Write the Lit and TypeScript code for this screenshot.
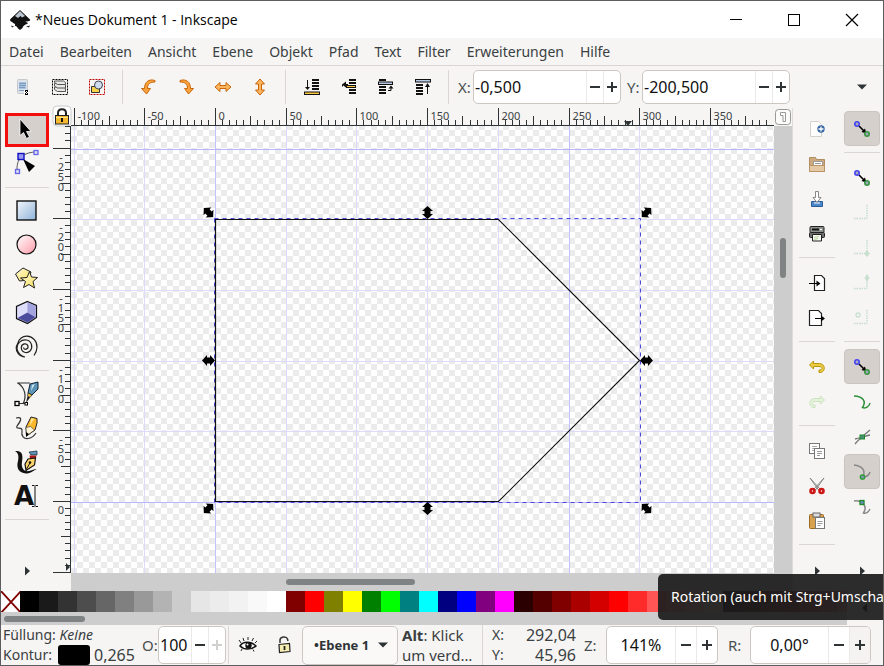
import { LitElement, html, svg, css, type SVGTemplateResult } from "lit";
import { customElement, property } from "lit/decorators.js";
import { classMap } from "lit/directives/class-map.js";

const nodes = (line: string) => svg`
  <path d="M9 9 L14 14" stroke="#000" stroke-width="1.6"/>
  <path d="M16.5 16.5 L11.5 15 L15 11.5Z" fill="#000"/>
  <circle cx="7" cy="7" r="2.2" fill="#aab" stroke="${line}" stroke-width="1.6"/>
  <circle cx="17" cy="17" r="2.2" fill="#9ab" stroke="#3a9440" stroke-width="1.6"/>`;

const dotted = svg`<path d="M17 4 V17.5 M4 17.5 H17" stroke="#c3dccb" stroke-width="1.4" stroke-dasharray="1.5 1" fill="none"/>`;
const bars = (x: number, ys: number[]) => ys.map((y) => svg`<path d="M${x} ${y} h7" stroke="#111" stroke-width="2"/>`);

const ICONS: Record<string, SVGTemplateResult> = {
  selectAll: svg`
    <rect x="6.500" y="4.500" width="10" height="14" rx="1" fill="#dde4ea" stroke="#c3c9cd"/>
    <path d="M8 7h7v7H8z" fill="#a9c4e2"/><path d="M8 8.500h7M8 10.500h7M8 12.500h6M8 15.500h5" stroke="#7d9cbd"/>
    <path d="M13 15h5v5h-5z" fill="#fff"/><path d="M14 15.500h3M14 19.500h3M14 16l3 3M17 16l-3 3" stroke="#000" stroke-width="1"/>`,
  layers: svg`
    <rect x="4.500" y="4.500" width="15" height="15" fill="none" stroke="#000" stroke-dasharray="2 1"/>
    <g fill="#e8e8e6" stroke="#555" stroke-width="1"><path d="M6.500 14.500l3 2h8v-3l-2-1.500h-9z"/><path d="M6.500 11l3 2h8v-3l-2-1.500h-9z"/><path d="M6.500 7.500l3 2h8v-2l-2-1.500h-9z"/></g>`,
  deselect: svg`
    <rect x="4.500" y="4.500" width="15" height="15" fill="none" stroke="#c00000" stroke-dasharray="2 1"/>
    <path d="M6.500 11.500h8v6h-8z" fill="#fbd34a" stroke="#333"/><circle cx="13.500" cy="10" r="4" fill="#cfdced" stroke="#445"/>`,
  rotLeft: svg`<path d="M18 5.500 C12 3.500 7.500 7 7.500 13.500 H4.500 L9.500 19 L13.500 13.500 H10.500 C10.500 9 13 7 18 7Z" fill="#f9a13a" stroke="#c9660a"/>`,
  rotRight: svg`<path d="M6 5.500 C12 3.500 16.500 7 16.500 13.500 H19.500 L14.500 19 L10.500 13.500 H13.500 C13.500 9 11 7 6 7Z" fill="#f9a13a" stroke="#c9660a"/>`,
  flipH: svg`<path d="M4 12 L9 7.500 V10.500 H15 V7.500 L20 12 L15 16.500 V13.500 H9 V16.500Z" fill="#fbb55f" stroke="#c9660a"/>`,
  flipV: svg`<path d="M12 4 L16.500 9 H13.500 V15 H16.500 L12 20 L7.500 15 H10.500 V9 H7.500Z" fill="#fbb55f" stroke="#c9660a"/>`,
  toBottom: svg`${bars(12, [5, 8, 11, 14])}<path d="M7.500 5v9" stroke="#111"/><path d="M5 12h5l-2.500 3z" fill="#111"/><rect x="4.500" y="17" width="15" height="2.500" fill="#fbc73c" stroke="#111"/>`,
  lower: svg`${bars(12, [5, 8, 15, 18])}<path d="M6 9.500h5M5.500 9.500v2" stroke="#111"/><path d="M9 6.500v6l-4-3z" fill="#111"/><rect x="9.500" y="10.500" width="9" height="2" fill="#fbc73c" stroke="#111"/>`,
  raise: svg`${bars(5, [5, 12, 15, 18])}<rect x="4.500" y="7" width="14" height="2.500" fill="#b9cbe6" stroke="#111"/><path d="M14 15.500h3v-3" stroke="#111" fill="none"/><path d="M14.500 13.500h5l-2.500-3z" fill="#111"/>`,
  toTop: svg`${bars(5, [10, 13, 16, 19])}<rect x="4.500" y="4.500" width="15" height="2.500" fill="#b9cbe6" stroke="#111"/><path d="M16.500 10v9" stroke="#111"/><path d="M14 12h5l-2.500-4z" fill="#111"/>`,
  select: svg`<path d="M5 1 V17.500 L8.500 14.500 L11.500 20.500 L14.500 19 L11.500 13.500 H16Z" fill="#000" stroke="#fff" stroke-width="0.8"/>`,
  node: svg`<path d="M2 17 C2 8 6 1 20 0" fill="none" stroke="#555"/>
    <path d="M8 7 L20 14 L14 20Z" fill="#000"/>
    <rect x="3" y="1.500" width="6" height="6" fill="#9a9af0" stroke="#1111c0" stroke-width="1.400"/>
    <rect x="19" y="-1.500" width="4" height="4" fill="#dde" stroke="#6666e8" stroke-width="1.300"/>
    <rect x="0.500" y="17.500" width="4" height="4" fill="#dde" stroke="#6666e8" stroke-width="1.300"/>`,
  rect: svg`<rect x="2" y="2" width="19" height="19" fill="url(#g-blue)" stroke="#000" stroke-width="1.300"/>`,
  ellipse: svg`<circle cx="11.500" cy="11.500" r="9.500" fill="url(#g-pink)" stroke="#111" stroke-width="1.200"/>`,
  star: svg`<path d="M8 1 L16 5 L13.500 13 L4.500 14 L0.500 7Z" fill="url(#g-yel)" stroke="#222"/>
    <path d="M14.500 4.500 L16.500 10 L22.500 10.500 L18 14.500 L19.500 21 L14 17.500 L8.500 20.500 L10.500 14.500 L5.500 11 L12 10.500Z" fill="url(#g-yel)" stroke="#222"/>`,
  cube: svg`<path d="M12.500 0.500 L21.500 4.500 V16.500 L12.500 22.500 L1.500 17.500 V5.500Z" fill="#c9c9f4" stroke="#111" stroke-width="1.200"/>
    <path d="M12.500 1.500 L2.500 6 V17 L12.500 11.500Z" fill="#dedefb"/><path d="M12.500 11.500 L2.500 17 L12.500 21.500 L20.500 16Z" fill="#4c4c9c"/><path d="M12.500 1.500 L20.500 5 V16 L12.500 11.500Z" fill="#a3a3de"/>`,
  spiral: svg`<path d="M8.500 12.500 C9 15.500 13.500 14.500 13 11 C12 7.500 6.500 8.500 6.300 12.500 C6.200 17.500 12 19 15 16 C18.500 12 16.500 6 11.500 5 C6 4.200 1.500 8.500 2 13.500 C2.500 18 6 21.500 10 22 M2.500 9 C3.500 3.500 8 1 12 1.200 C18 1.500 22.300 6.500 22 12.500 C21.800 16 20.500 18.500 19 20.500 M10 22 C4 22 1 16.500 1.200 12.500 C1.300 11 2 10 2.500 9" fill="none" stroke="#222" stroke-width="1.200"/>`,
  pen: svg`<path d="M2 1 H15 M3 1 C10 6 12 14 8 22 M4 21.500 H12" fill="none" stroke="#333" stroke-width="1.200"/>
    <path d="M15 2 L23 0 V7 L17 13 L13 11Z" fill="#5d93b5" stroke="#123"/><path d="M17 3 L20 2 L16 9Z" fill="#cfe4f0"/>
    <path d="M13 11 L17 13 L15 15.500 L12.500 13.500Z" fill="#fbc73c" stroke="#222" stroke-width="0.700"/><path d="M12.500 14 L15 15.500 L11 21Z" fill="#222"/>
    <rect x="0" y="19.500" width="4" height="4" fill="#fff" stroke="#000" stroke-width="1.300"/><rect x="10" y="20.500" width="2.500" height="2.500" fill="#fff" stroke="#000"/>`,
  pencil: svg`<path d="M1 2 C9 0 5 6 2 10 C0 14 8 10 7 15 C6 20 9 23 13 22.500 C17 22 19 20 21 17" fill="none" stroke="#333" stroke-width="1.200"/>
    <path d="M11 11 L16 1 L22 2.500 V7 L20 14 L11.500 20Z" fill="#fbb82a" stroke="#222"/><path d="M11 11.500 L15.500 10.500 L19.500 14 L11.500 20Z" fill="#fff3d6" stroke="#333" stroke-width="0.600"/><path d="M16.500 2 L19 3 L14.500 10Z" fill="#ffe79a"/><path d="M11 16 L14 18 L11 21Z" fill="#000"/>`,
  calligraphy: svg`<path d="M0 1 C8 0 8 6 7 12 C6 18 9 22 14 21 C18 20 20 18 22 20 C19 19 17 24 11 23.500 C4 23 1 18 3 11 C4 5 3 3 0 1Z" fill="#111"/>
    <path d="M14 2 L22 1 V5 L16 5Z" fill="#5d93b5" stroke="#123" stroke-width="0.700"/><path d="M14.500 5.500 H21.500 L20.500 9 H15Z" fill="#b01818"/>
    <path d="M13 9 L20.500 8 L19.500 15 L11 20.500 L10 14Z" fill="#fcd46a" stroke="#111" stroke-width="1.200"/><path d="M11.500 19 L15 13" stroke="#111"/><circle cx="15" cy="12.500" r="1.300" fill="#111"/>`,
  newDoc: svg`<path d="M5.500 4.500h8l3 3v12h-11z" fill="#fdfdfb" stroke="#d3d3cc"/><circle cx="16" cy="12" r="3.700" fill="#3465a4"/><path d="M16 9.500v5M13.500 12h5" stroke="#fff" stroke-width="1.300"/>`,
  open: svg`<path d="M4.500 5.500h6l1 2h8v12h-15z" fill="#cda97e" stroke="#b08c62"/><path d="M8.500 9.500h9v4h-9z" fill="#fff" stroke="#999"/><path d="M10 11.500h6" stroke="#999"/><path d="M4.500 13.500h15v6h-15z" fill="#e4c9a4" stroke="#b89468"/>`,
  save: svg`<path d="M6.500 14.500h11v5h-11z" fill="#4a86c9" stroke="#2d5d96"/><path d="M9 16h6" stroke="#cde" stroke-width="1.500"/><path d="M10.500 4.500h3v6h2.500l-4 5l-4-5h2.500z" fill="#fff" stroke="#888"/>`,
  print: svg`<rect x="5" y="4.500" width="14" height="6" rx="1" fill="#8d928e" stroke="#222"/><path d="M7 7.500h7" stroke="#111" stroke-width="2"/><path d="M15 7.500h2" stroke="#fff"/><rect x="4.500" y="10.500" width="15" height="5" rx="1" fill="#6b706d" stroke="#222"/><path d="M7.500 12.500h9v6.500h-9z" fill="#f6faf0" stroke="#222"/><path d="M9 15.500l5-1M9 17.500l4-1" stroke="#b5d59c"/>`,
  importDoc: svg`<path d="M9.500 4.500h7l3 3v12h-10z" fill="#fff" stroke="#222" stroke-width="1.200"/><path d="M4 12.500h9" stroke="#000"/><path d="M11.500 9.500v6l4-3z" fill="#000"/>`,
  exportDoc: svg`<path d="M4.500 4.500h9l3 3v12h-12z" fill="#fff" stroke="#222" stroke-width="1.200"/><path d="M10 12.500h8" stroke="#000"/><path d="M16 9.500v6l4-3z" fill="#000"/>`,
  undo: svg`<path d="M8.500 6 L4.500 10 L8.500 14 V11.500 H14 C18 11.500 18 15 14 15 V17.500 C21 18 21 9 14.500 8.500 H8.500Z" fill="#eccc42" stroke="#b8960c"/>`,
  redo: svg`<path d="M15.500 6 L19.500 10 L15.500 14 V11.500 H10 C6 11.500 6 15 10 15 V17.500 C3 18 3 9 9.500 8.500 H15.500Z" fill="#e3f3da" stroke="#cbe3bf"/>`,
  copy: svg`<rect x="4.500" y="4.500" width="10" height="10" fill="#fff" stroke="#777"/><path d="M7 7.500h5M7 9.500h5M7 11.500h3" stroke="#aaa"/><rect x="9.500" y="9.500" width="10" height="10" fill="#fff" stroke="#777"/><path d="M12 12.500h5M12 14.500h5M12 16.500h3" stroke="#999"/>`,
  cut: svg`<path d="M5 4 L15 15 L13.500 16Z M19 4 L9 15 L10.500 16Z" fill="#fff" stroke="#888"/><circle cx="7.500" cy="17" r="2" fill="#fff" stroke="#cc1717" stroke-width="2.600"/><circle cx="16.500" cy="17" r="2" fill="#fff" stroke="#cc1717" stroke-width="2.600"/>`,
  paste: svg`<rect x="4.500" y="5.500" width="14" height="14" rx="1" fill="#d9a04e" stroke="#9b6a22"/><rect x="8" y="4" width="7" height="4" fill="#ddd" stroke="#666"/><rect x="10.500" y="8.500" width="9" height="11" fill="#fff" stroke="#777"/><path d="M12.500 12.500h5M12.500 14.500h5M12.500 16.500h3" stroke="#999"/>`,
  snap: nodes("#4444f0"),
  snapBox: dotted,
  snapMid: svg`${dotted}<path d="M17 14l3 3.500l-3 3.500l-3-3.500z" fill="#c9e0d0"/>`,
  snapEdge: svg`${dotted}<path d="M17 3l2.500 4l-2.500 4l-2.500-4z" fill="#c9e0d0"/>`,
  snapCenter: svg`${dotted}<circle cx="8" cy="9" r="2" fill="none" stroke="#c9e0d0" stroke-width="1.300"/>`,
  snapPath: svg`<path d="M4 6 C12 6 17 11 12.500 17.500 C16 19 19.500 16 20 13" fill="none" stroke="#2c9038" stroke-width="1.500"/>`,
  snapCross: svg`<path d="M5 19 C8 15 14 10 20 5 M5 14 C10 13 15 11 20 10" fill="none" stroke="#777" stroke-width="1.300"/><rect x="10" y="10" width="4.500" height="4" fill="#4a8f7a" stroke="#1f8a28"/>`,
  snapCusp: svg`<path d="M4 5 C12 6 16 10 13 17 C17 17 19 15 20 12" fill="none" stroke="#888" stroke-width="1.500"/><circle cx="12.500" cy="17" r="2.200" fill="#7a9aa8" stroke="#2c9a34" stroke-width="1.300"/>`,
  snapSmooth: svg`<path d="M4 6 C12 5 18 11 13.500 18 C17 19 19 16 20 14" fill="none" stroke="#888" stroke-width="1.500"/><rect x="10" y="5.500" width="4" height="4" fill="#6a8fc0" stroke="#1f8a28" stroke-width="1.300"/>`,
  eye: svg`<path d="M4 13 C7 8 15 8 20 13 C15 17 8 17 4 13Z" fill="#fff" stroke="#111" stroke-width="1.500"/><circle cx="12.500" cy="12.500" r="3.200" fill="#111"/><circle cx="11.500" cy="11.500" r="1" fill="#fff"/><path d="M5 10L3 7M8 8L7 5M12 7V4M16 8L17.500 5M19 10L21 8M6 16L5 18M17 16.500L18 18.500" stroke="#222"/>`,
  unlock: svg`<path d="M8 10 V7 C8 3.500 14.500 3 15.500 6 L16 8" fill="none" stroke="#333" stroke-width="1.500"/><path d="M7 11.500 L17.500 10.500 L18 18.500 L7.500 19.500Z" fill="#f6edb0" stroke="#222" stroke-width="1.200"/><path d="M12.500 13v4" stroke="#222" stroke-width="1.800"/>`,
  lock: svg`<rect x="3" y="1" width="18" height="20" rx="4" fill="#fff" stroke="#ccc"/><path d="M8 11 V8 C8 3 16 3 16 8 V11" fill="none" stroke="#222" stroke-width="2"/><rect x="5.500" y="10.500" width="13" height="8.500" fill="#f5b82e" stroke="#222"/><path d="M6 12.500h12" stroke="#ffe28a"/><path d="M12 13v4" stroke="#111" stroke-width="2"/>`,
  minus: svg`<path d="M7 12h10" stroke="currentColor" stroke-width="2"/>`,
  plus: svg`<path d="M7 12h10M12 7v10" stroke="currentColor" stroke-width="2"/>`,
  right: svg`<path d="M10 7.500v9l5-4.500z" fill="#2e3436"/>`,
  left: svg`<path d="M14 7.500v9l-5-4.500z" fill="#000"/>`,
  down: svg`<path d="M7 9.500h10l-5 5z" fill="#2e3436"/>`,
  page: svg`<rect x="4.500" y="4.500" width="15" height="15" rx="3" fill="#fbfbfa" stroke="#999"/><path d="M9.500 7.500h5v9h-2.500v-6h-2.500z" fill="#fff" stroke="#999"/>`,
  minimize: svg`<path d="M6 11.500h12" stroke="#000"/>`,
  maximize: svg`<rect x="6.500" y="6.500" width="11" height="11" fill="none" stroke="#000"/>`,
  close: svg`<path d="M6 6l12 12M18 6l-12 12" stroke="#000" stroke-width="1.200"/>`,
  none: svg`<rect width="24" height="24" fill="#fff"/><path d="M1 0L23 24M23 0L1 24" stroke="#800000" stroke-width="2"/>`,
  logo: svg`<path d="M12 2 L22 11.500 C23 13 20 13.500 17 13.500 C19 14.500 21 15 19 16 C16 17 15 18 14.500 20 L12 22 L9.500 20 C10 18 6 18.500 7 17 C8 16 5 15 2.500 13 C1.500 12 2 11.500 3 10.500Z" fill="#111"/><path d="M12 3 L17 8 L14 9.500 L12.500 8 L10 10 L7 8Z" fill="#b9c2cf"/><path d="M3 17.500l3 1-2 1zM18 18.500l4-1-1 2z" fill="#222"/>`,
};

const icon = (name: string, size = 24) =>
  svg`<svg class="icon" width="${size}" height="${size}" viewBox="0 0 24 24" fill="none" aria-hidden="true">${ICONS[name]}</svg>`;

const shared = css`
  * { box-sizing: border-box; }
  button { font: inherit; color: inherit; border: 0; background: none; padding: 0; margin: 0; display: flex; align-items: center; justify-content: center; }
  .icon { display: block; flex: none; overflow: visible; }
`;

@customElement("spin-box")
class SpinBox extends LitElement {
  @property() label = "";
  @property() name = "";
  @property() value = "";
  @property({ type: Boolean }) full = false;
  static styles = [shared, css`
    :host { display: flex; align-items: center; }
    label { flex: none; width: var(--label, 15px); color: #4a4f50; font-size: 15px; }
    .box { flex: 1; display: flex; align-self: stretch; min-width: 0; background: #fff; border: 1px solid #cdc7c2; border-radius: 5px; overflow: hidden; }
    input { flex: 1; min-width: 0; width: 0; border: 0; outline: 0; padding: 0 1px; background: none; font: inherit; color: #111; text-align: var(--align, left); }
    button { width: var(--step, 17px); border-left: 1px solid #ebe9e7; color: #2e3436; }
    .off { color: #d0d0ce; }
    .hot { background: #f4f3f2; }
  `];
  render() {
    return html`<label for="v">${this.label}</label>
      <div class="box">
        <input id="v" .value=${this.value} />
        <button aria-label="Verringern">${icon("minus")}</button>
        <button class=${classMap({ off: this.full, hot: this.name === "rotation" })} aria-label="Erhöhen">${icon("plus")}</button>
      </div>`;
  }
}

const ORIGIN_X = 144;
const ORIGIN_Y = 376;
const UNIT = 7.07;

@customElement("ruler-top")
class RulerTop extends LitElement {
  static styles = css`:host { display: block; height: 18px; overflow: hidden; } svg { display: block; width: 100%; height: 18px; } .scale { font: 11px "Noto Sans", sans-serif; fill: #3c4142; }`;
  render() {
    const ticks = [];
    for (let i = -20; i <= 79; i++) {
      const x = Math.round(ORIGIN_X + i * UNIT) + 0.5;
      const y = i % 10 === 0 ? 0 : i % 5 === 0 ? 8 : 12;
      ticks.push(svg`<path d="M${x} ${y}V17" stroke="#2e3436"/>`);
      if (i % 10 === 0) ticks.push(svg`<text class="scale" x="${x + 3}" y="12">${i * 5}</text>`);
    }
    return html`<svg>${ticks}<path d="M0 17.500H4000" stroke="#2e3436"/><path d="M553 13h8l-4 5z" fill="#2e3436"/></svg>`;
  }
}

@customElement("ruler-side")
class RulerSide extends LitElement {
  static styles = css`:host { display: block; width: 18px; overflow: hidden; } svg { display: block; width: 18px; height: 100%; } .scale { font: 11px "Noto Sans", sans-serif; fill: #3c4142; text-anchor: middle; }`;
  render() {
    const ticks = [];
    for (let i = -53; i <= 60; i++) {
      const y = Math.round(ORIGIN_Y + i * UNIT) - 0.5;
      const x = i % 10 === 0 ? 0 : i % 5 === 0 ? 8 : 12;
      ticks.push(svg`<path d="M${x} ${y}H17" stroke="#2e3436"/>`);
      if (i % 10 === 0 && i <= 0)
        [...String(i * 5)].forEach((c, n) => ticks.push(svg`<text class="scale" x="8" y="${y + 12 + n * 10}">${c}</text>`));
    }
    return html`<svg>${ticks}<path d="M17.500 0V4000" stroke="#2e3436"/><path d="M13 437v8l4-4z" fill="#2e3436"/></svg>`;
  }
}

const DOUBLE_ARROW = "M0-6.500L5.500-1.500H3V1.500H5.500L0 6.500L-5.500 1.500H-3V-1.500H-5.500Z";
const HANDLES: [number, number, number][] = [
  [137, 86, -45], [356, 86, 0], [575, 86, 45],
  [137, 234, 90], [575, 234, 90],
  [137, 382, 45], [356, 382, 0], [575, 382, -45],
];

@customElement("drawing-canvas")
class DrawingCanvas extends LitElement {
  static styles = css`:host { display: block; overflow: hidden; min-width: 0; min-height: 0; background: #fff; } svg { display: block; width: 100%; height: 100%; }`;
  render() {
    const lines = [];
    for (let i = -2; i < 20; i++) {
      const x = Math.round(ORIGIN_X + i * UNIT * 10) + 0.5;
      const y = Math.round(ORIGIN_Y - i * UNIT * 10) + 0.5;
      lines.push(svg`<path d="M${x} 0V4000" stroke="${i % 5 === 0 ? "#c4c1ff" : "#dcdbfb"}"/>`);
      lines.push(svg`<path d="M0 ${y}H4000" stroke="${i % 5 === 0 ? "#b9b6ff" : "#dcdbfb"}"/>`);
    }
    return html`<svg role="img" aria-label="Zeichenfläche">
      <defs><pattern id="check" y="-2" width="12" height="12" patternUnits="userSpaceOnUse"><path d="M0 0h6v6H0zM6 6h6v6H6z" fill="#ebebeb"/></pattern></defs>
      <rect width="100%" height="100%" fill="url(#check)"/>
      ${lines}
      <rect x="143.500" y="92.500" width="426" height="284" fill="none" stroke="#4a48d8" stroke-dasharray="4 4"/>
      <path d="M144.500 93.500H427.500L568.500 234.500L427.500 375.500H144.500Z" fill="none" stroke="#111" stroke-width="1.200"/>
      ${HANDLES.map(([x, y, r]) => svg`<path d="${DOUBLE_ARROW}" transform="translate(${x + 0.5} ${y + 0.5}) rotate(${r})"/>`)}
    </svg>`;
  }
}

const MENU = ["Datei", "Bearbeiten", "Ansicht", "Ebene", "Objekt", "Pfad", "Text", "Filter", "Erweiterungen", "Hilfe"];
const TOOLBAR = ["selectAll", "layers", "deselect", "|", "rotLeft", "rotRight", "flipH", "flipV", "|", "toBottom", "lower", "raise", "toTop", "|"];
const TOOLS = ["select", "node", "|", "rect", "ellipse", "star", "cube", "spiral", "|", "pen", "pencil", "calligraphy", "text", "|"];
const COMMANDS = ["newDoc", "open", "save", "print", "|", "importDoc", "exportDoc", "|", "undo", "redo", "|", "copy", "cut", "paste", "|"];
const SNAPS = ["snap*", "|", "snap", "snapBox", "snapMid", "snapEdge", "snapCenter", "|", "snap*", "snapPath", "snapCross", "snapCusp*", "snapSmooth"];
const SWATCHES = ("000000 1a1a1a 333333 4d4d4d 666666 808080 999999 b3b3b3 cccccc e6e6e6 ececec f2f2f2 f9f9f9 ffffff " +
  "800000 ff0000 808000 ffff00 008000 00ff00 008080 00ffff 000080 0000ff 800080 ff00ff 2b0000 550000 800000 aa0000 d40000 ff0000 " +
  "ff2a2a ff5555 ff8080 ffaaaa ffd5d5 280b0b 501616 782121 a02c2c c83737 d35f5f de8787").split(" ");

@customElement("app-root")
class AppRoot extends LitElement {
  static styles = [shared, css`
    :host { display: flex; flex-direction: column; height: 100vh; box-sizing: border-box; overflow: hidden; border: 1px solid #5d5d5f; background: #f6f5f4; color: #3a4042; font: 15px "Noto Sans", "Open Sans", sans-serif; }
    .title { display: flex; align-items: center; height: 37px; flex: none; background: #fff; color: #000; padding: 0 2px 0 7px; font: 14px "Open Sans", sans-serif; }
    .title h1 { font: inherit; margin: 0 auto 0 3px; }
    .title button { width: 58px; height: 35px; }
    .menu { display: flex; gap: 16px; height: 28px; flex: none; padding: 0 8px; border-bottom: 1px solid #d8d5d2; font-size: 14px; }
    .bar { display: flex; align-items: center; height: 42px; flex: none; padding: 0 9px 0 3px; }
    .bar > button { width: 37px; height: 34px; }
    .bar > .rule { width: 1px; height: 34px; background: #dad7d4; margin: 0 7px; }
    .bar > .rule + spin-box { margin-left: 2px; }
    .bar spin-box { width: 163px; height: 34px; font-size: 16px; }
    .bar spin-box + spin-box { margin-left: 6px; }
    .bar > .more { width: 24px; margin-left: auto; }
    .main { flex: 1; min-height: 0; display: grid; grid-template-columns: 52px 18px minmax(0, 1fr) 18px 48px 43px; }
    .tools, .column { display: flex; flex-direction: column; align-items: center; min-height: 0; }
    .tools { padding-top: 5px; }
    .tools button { width: 44px; height: 34px; flex: none; }
    .tools .on { border: 3px solid #f30d0d; background: #d5d0cc; }
    .tools .rule { width: 44px; height: 1px; flex: none; margin: 6px 0; background: #dad7d4; }
    .glyph { font: bold 26px/24px "DejaVu Sans", sans-serif; color: #111; display: flex; align-items: center; }
    .column { padding-top: 3px; }
    .column.cmd { border-left: 1px solid #dedbd8; }
    .column button { width: 36px; height: 35px; flex: none; border-radius: 4px; }
    .column .on { background: #d5d0cc; border: 1px solid #cbc5c0; }
    .column .rule { width: 36px; height: 1px; flex: none; margin: 6px 0 7px; background: #dad7d4; }
    .tools .end, .column .end { height: 24px; margin: auto 0 8px; }
    .sideruler { display: grid; grid-template-rows: 18px minmax(0, 1fr) 18px; }
    .corner { width: 18px; height: 18px; }
    .sheet { display: grid; grid-template-rows: 18px minmax(0, 1fr) 18px; min-width: 0; }
    .hscroll { background: #cdcdcd; padding: 6px 0 0 215px; }
    .thumb { width: 129px; height: 6px; border-radius: 3px; background: #7f8383; }
    .vscroll { display: flex; flex-direction: column; align-items: center; background: #cdcdcd; }
    .vscroll button { height: 18px; align-self: stretch; background: #f6f5f4; }
    .vscroll .thumb { width: 6px; height: 40px; margin-top: 112px; }
    .palette { position: relative; flex: none; display: grid; grid-template-columns: minmax(0, 1fr) 36px; height: 34px; }
    .colors { background: #cdcdcd; overflow: hidden; }
    .swatches { display: flex; height: 21px; }
    .swatches button { width: 19px; height: 21px; flex: none; overflow: hidden; }
    .colors .thumb { width: 81px; margin: 4px 3px; }
    .palette .prev { height: 34px; }
    .tooltip { position: absolute; left: calc(100% - 225px); top: -17px; width: 240px; height: 46px; padding-left: 13px; border-radius: 5px; background: rgba(28, 28, 28, 0.93); color: #fff; font-size: 14px; line-height: 46px; white-space: nowrap; overflow: hidden; }
    .status { display: flex; align-items: center; height: 40px; flex: none; font-size: 14px; padding-right: 10px; }
    .two { display: grid; line-height: 20px; white-space: nowrap; }
    .style { width: 141px; flex: none; padding-left: 2px; }
    .style div { display: flex; align-items: center; }
    .ink { width: 32px; height: 20px; border-radius: 3px; background: #000; margin: 0 4px 0 6px; }
    .big { font-size: 16px; }
    .status spin-box { height: 38px; font-size: 16px; }
    .opacity { width: 84px; --label: 16px; }
    .status > button { width: 36px; height: 36px; }
    .layer { display: flex; align-items: center; width: 96px; height: 39px; flex: none; border: 1px solid #cdc7c2; border-radius: 5px; background: #faf9f8; padding-left: 11px; }
    .layer select { appearance: none; border: 0; outline: 0; background: none; padding: 0; width: 57px; font: bold 13px "Noto Sans", sans-serif; color: #2e3436; }
    .hint { width: 80px; flex: none; margin-left: 4px; font-size: 15px; }
    .pos { grid-template-columns: 32px 52px; width: 94px; flex: none; overflow: hidden; border-left: 1px solid #dad7d4; padding-left: 9px; }
    .pos .big { text-align: right; }
    .zoom { width: 134px; margin-left: 8px; --label: 22px; --step: 21px; --align: center; }
    .rotation { flex: 1; max-width: 143px; margin-left: 10px; --label: 22px; --step: 21px; --align: center; }
    .vr { width: 1px; height: 38px; background: #dad7d4; margin: 0 1px 0 2px; }
    .gradients { position: absolute; width: 0; height: 0; }
  `];

  private items(list: string[]) {
    return list.map((n, i) => {
      if (n === "|") return html`<span class="rule"></span>`;
      const on = n.endsWith("*") || n === "select";
      const key = n.replace("*", "");
      return html`<button class=${classMap({ on })} aria-label="${key} ${i}">
        ${key === "text"
          ? html`<span class="glyph">A<svg class="icon" width="6" height="22" viewBox="0 0 6 22" fill="none"><path d="M-2 .5h2.500M1.500 .5H4M1 1v20M-2 21.500h2.500M1.500 21.500H4" stroke="#111"/></svg></span>`
          : icon(key)}
      </button>`;
    });
  }

  render() {
    return html`
      <header class="title">
        ${icon("logo")}<h1>*Neues Dokument 1 - Inkscape</h1>
        <button aria-label="Minimieren">${icon("minimize")}</button>
        <button aria-label="Maximieren">${icon("maximize")}</button>
        <button aria-label="Schließen">${icon("close")}</button>
      </header>
      <nav class="menu">${MENU.map((m) => html`<button>${m}</button>`)}</nav>
      <div class="bar">
        ${this.items(TOOLBAR)}
        <spin-box label="X:" value="-0,500"></spin-box>
        <spin-box label="Y:" value="-200,500"></spin-box>
        <button class="more" aria-label="Mehr">${icon("down")}</button>
      </div>
      <main class="main">
        <div class="tools">${this.items(TOOLS)}<button class="end" aria-label="Mehr">${icon("right")}</button></div>
        <div class="sideruler">
          <button class="corner" aria-label="Hilfslinien sperren">${icon("lock")}</button>
          <ruler-side></ruler-side>
        </div>
        <div class="sheet">
          <ruler-top></ruler-top>
          <drawing-canvas></drawing-canvas>
          <div class="hscroll"><div class="thumb"></div></div>
        </div>
        <div class="vscroll"><button aria-label="Seite">${icon("page")}</button><div class="thumb"></div></div>
        <div class="column cmd">${this.items(COMMANDS)}<button class="end" aria-label="Mehr">${icon("right")}</button></div>
        <div class="column">${this.items(SNAPS)}<button class="end" aria-label="Mehr">${icon("right")}</button></div>
      </main>
      <div class="palette">
        <div class="colors">
          <div class="swatches">
            <button aria-label="Keine">${icon("none", 22)}</button>
            ${SWATCHES.map((c) => html`<button aria-label="#${c}" style="background:#${c}"></button>`)}
          </div>
          <div class="thumb"></div>
        </div>
        <button class="prev" aria-label="Palette">${icon("left")}</button>
        <div class="tooltip" role="tooltip">Rotation (auch mit Strg+Umscha</div>
      </div>
      <footer class="status">
        <div class="two style">
          <div>Füllung:&nbsp;<i>Keine</i></div>
          <div>Kontur:<span class="ink"></span><span class="big">0,265</span></div>
        </div>
        <spin-box class="opacity" label="O:" value="100" full></spin-box>
        <span class="vr"></span>
        <button aria-label="Sichtbarkeit">${icon("eye")}</button>
        <button aria-label="Sperren">${icon("unlock")}</button>
        <div class="layer"><select aria-label="Ebene"><option>•Ebene 1</option></select>${icon("down")}</div>
        <div class="two hint"><span><b>Alt</b>: Klick</span><span>um verd…</span></div>
        <div class="two pos"><span>X:</span><span class="big">292,04</span><span>Y:</span><span class="big">45,96</span></div>
        <spin-box class="zoom" label="Z:" value="141%"></spin-box>
        <spin-box class="rotation" name="rotation" label="R:" value="0,00°"></spin-box>
      </footer>
      <svg class="gradients" aria-hidden="true"><defs>
        <linearGradient id="g-blue" x2="1" y2="1"><stop stop-color="#f2f7fc"/><stop offset="1" stop-color="#8fb2d9"/></linearGradient>
        <linearGradient id="g-pink" x2="1" y2="1"><stop stop-color="#fff"/><stop offset="1" stop-color="#ff9aa8"/></linearGradient>
        <linearGradient id="g-yel" x2="1" y2="1"><stop stop-color="#fffbe0"/><stop offset="1" stop-color="#f7df55"/></linearGradient>
      </defs></svg>`;
  }
}
